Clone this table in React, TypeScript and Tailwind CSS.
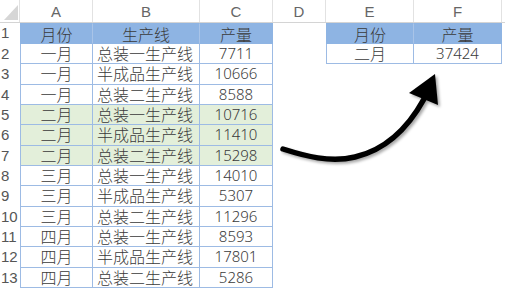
import React from "react";

const rows: [string, string, string, boolean][] = [
  ["一月", "总装一生产线", "7711", false],
  ["一月", "半成品生产线", "10666", false],
  ["一月", "总装二生产线", "8588", false],
  ["二月", "总装一生产线", "10716", true],
  ["二月", "半成品生产线", "11410", true],
  ["二月", "总装二生产线", "15298", true],
  ["三月", "总装一生产线", "14010", false],
  ["三月", "半成品生产线", "5307", false],
  ["三月", "总装二生产线", "11296", false],
  ["四月", "总装一生产线", "8593", false],
  ["四月", "半成品生产线", "17801", false],
  ["四月", "总装二生产线", "5286", false],
];

const font = { fontFamily: '"Noto Sans CJK SC", "Noto Sans", sans-serif' };
const numFont = { fontFamily: '"Noto Sans", "Noto Sans CJK SC", sans-serif' };
const rnFont = { fontFamily: '"Liberation Sans", sans-serif' };

export default function App() {
  return (
    <div
      className="relative w-[505px] h-[297px] bg-white overflow-hidden text-[#3a3a3a] font-light"
      style={font}
    >
      {/* column header */}
      <div className="flex h-[23px] border-b border-[#d4d4d4] text-[15px] text-[#666] leading-[23px]" style={rnFont}>
        <div className="w-[20px] relative border-r border-[#e2e2e2]">
          <svg className="absolute left-[4px] top-[5px]" width="14" height="15">
            <polygon points="14,0 14,15 0,15" fill="#d6d6d6" />
          </svg>
        </div>
        <div className="w-[73px] text-center border-r border-[#e2e2e2]">A</div>
        <div className="w-[107px] text-center border-r border-[#e2e2e2]">B</div>
        <div className="w-[73px] text-center border-r border-[#e2e2e2]">C</div>
        <div className="w-[53px] text-center border-r border-[#e2e2e2]">D</div>
        <div className="w-[88px] text-center border-r border-[#e2e2e2]">E</div>
        <div className="w-[88px] text-center border-r border-[#e2e2e2]">F</div>
        <div className="flex-1" />
      </div>

      {/* row 1 */}
      <div className="flex h-[21px] text-[16px] leading-[20px]">
        <div className="w-[20px] pl-[1px] text-[#555] text-[15px] font-normal" style={rnFont}>1</div>
        <div className="w-[73px] text-center bg-[#8eb4e3] border border-[#8eb4e3] border-r-[#a9c4e8]">月份</div>
        <div className="w-[107px] text-center bg-[#8eb4e3] border-y border-[#8eb4e3] border-r border-r-[#a9c4e8]">生产线</div>
        <div className="w-[73px] text-center bg-[#8eb4e3] border-y border-r border-[#8eb4e3]">产量</div>
        <div className="w-[53px]" />
        <div className="w-[88px] text-center bg-[#8eb4e3] border border-[#8eb4e3] border-r-[#a9c4e8]">月份</div>
        <div className="w-[88px] text-center bg-[#8eb4e3] border-y border-r border-[#8eb4e3]">产量</div>
      </div>

      {rows.map((r, i) => {
        const bg = r[3] ? "bg-[#e3efda]" : "bg-white";
        return (
          <div key={i} className="flex h-[20.33px] text-[16px] leading-[19px]">
            <div className="w-[20px] pl-[1px] text-[#555] text-[15px] font-normal" style={rnFont}>{i + 2}</div>
            <div className={`w-[73px] text-center border-l border-b border-r border-[#9dbbe4] ${bg}`}>{r[0]}</div>
            <div className={`w-[107px] pl-[4px] border-b border-r border-[#9dbbe4] ${bg}`}>{r[1]}</div>
            <div className={`w-[73px] text-center text-[15px] border-b border-r border-[#9dbbe4] ${bg}`} style={numFont}>{r[2]}</div>
            <div className="w-[53px]" />
            {i === 0 ? (
              <>
                <div className="w-[88px] text-center border-l border-b border-r border-[#9dbbe4]">二月</div>
                <div className="w-[88px] text-center text-[15px] border-b border-r border-[#9dbbe4]" style={numFont}>37424</div>
              </>
            ) : null}
          </div>
        );
      })}

      {/* arrow */}
      <svg className="absolute left-0 top-0 pointer-events-none" width="505" height="297">
        <defs>
          <filter id="sh" x="-20%" y="-20%" width="140%" height="140%">
            <feGaussianBlur in="SourceAlpha" stdDeviation="1.5" />
            <feOffset dx="2" dy="2" result="b" />
            <feComponentTransfer>
              <feFuncA type="linear" slope="0.35" />
            </feComponentTransfer>
            <feMerge>
              <feMergeNode />
              <feMergeNode in="SourceGraphic" />
            </feMerge>
          </filter>
        </defs>
        <g filter="url(#sh)">
          <path
            d="M283 149 C 305 156, 330 163, 355 157 C 385 150, 408 128, 424 99"
            fill="none"
            stroke="#000"
            strokeWidth="5.5"
            strokeLinecap="round"
          />
          <polygon points="409,93 435,74 438,105" fill="#000" />
        </g>
      </svg>
    </div>
  );
}
